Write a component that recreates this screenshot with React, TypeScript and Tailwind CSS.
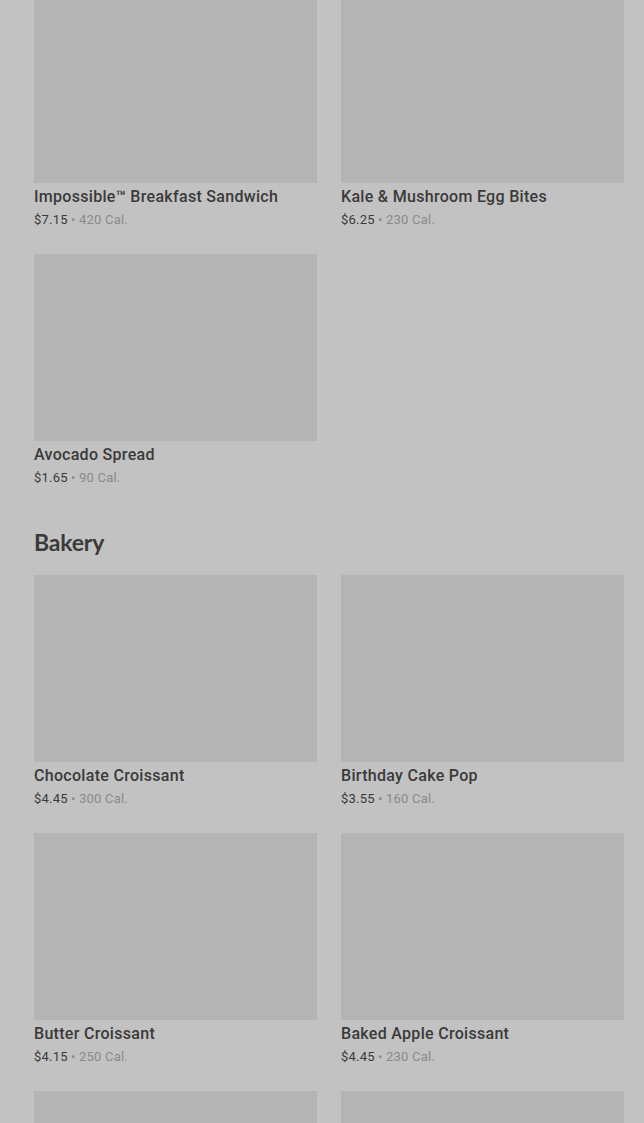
import React from "react";

type Item = { name: string; price: string; cal: string };

const Card = ({ item }: { item: Item }) => (
  <div className="flex flex-col">
    <div className="h-[187px] w-full bg-[#b4b4b4]" />
    <div className="pt-[4px] text-[16px] leading-[20px] font-medium text-[#3a3a3a] tracking-[0.3px]">{item.name}</div>
    <div className="mt-[4px] text-[13px] leading-[18px] tracking-[0.2px]">
      <span className="text-[#3a3a3a]">{item.price}</span>
      <span className="text-[#8a8a8a]"> • {item.cal}</span>
    </div>
  </div>
);

export default function App() {
  const top: Item[] = [
    { name: "Impossible™ Breakfast Sandwich", price: "$7.15", cal: "420 Cal." },
    { name: "Kale & Mushroom Egg Bites", price: "$6.25", cal: "230 Cal." },
    { name: "Avocado Spread", price: "$1.65", cal: "90 Cal." },
  ];
  const bakery: Item[] = [
    { name: "Chocolate Croissant", price: "$4.45", cal: "300 Cal." },
    { name: "Birthday Cake Pop", price: "$3.55", cal: "160 Cal." },
    { name: "Butter Croissant", price: "$4.15", cal: "250 Cal." },
    { name: "Baked Apple Croissant", price: "$4.45", cal: "230 Cal." },
  ];
  return (
    <div className="h-[1123px] w-[644px] overflow-hidden bg-[#c2c2c2]" style={{ fontFamily: "Roboto, 'Noto Sans', sans-serif" }}>
      <div className="-mt-[4px] pl-[34px] pr-[20px]">
        <div className="grid grid-cols-2 gap-x-[24px] gap-y-[25px]">
          {top.map((it) => (
            <Card key={it.name} item={it} />
          ))}
        </div>
        <h2 className="mt-[40px] text-[23px] leading-[30px] font-bold text-[#3a3a3a] tracking-[-0.2px]" style={{ fontFamily: "Lato, 'Noto Sans', sans-serif" }}>
          Bakery
        </h2>
        <div className="mt-[18px] grid grid-cols-2 gap-x-[24px] gap-y-[25px]">
          {bakery.map((it) => (
            <Card key={it.name} item={it} />
          ))}
          <div className="h-[187px] w-full bg-[#b4b4b4]" />
          <div className="h-[187px] w-full bg-[#b4b4b4]" />
        </div>
      </div>
    </div>
  );
}
